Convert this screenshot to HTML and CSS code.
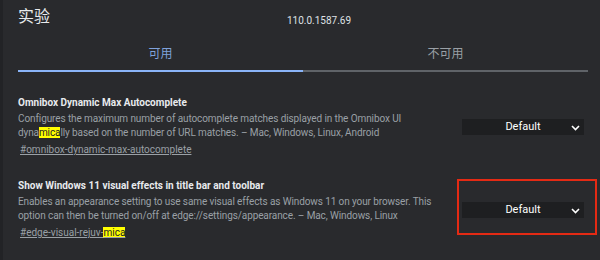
FILE: index.html
```html
<!DOCTYPE html>
<html lang="zh-CN">
<head>
    <meta charset="UTF-8">
    <meta name="viewport" content="width=device-width, initial-scale=1.0">
    <title>实验</title>
    <link rel="stylesheet" href="styles.css">
</head>
<body>
    <div class="header">
        <h1>实验</h1>
        <span class="version">110.0.1587.69</span>
    </div>

    <div class="tabs">
        <div class="tab active">可用</div>
        <div class="tab">不可用</div>
    </div>

    <div class="flag first">
        <div class="flag-text">
            <h3>Omnibox Dynamic Max Autocomplete</h3>
            <p>Configures the maximum number of autocomplete matches displayed in the Omnibox UI dyna<mark>mica</mark>lly based on the number of URL matches. – Mac, Windows, Linux, Android</p>
            <a href="#">#omnibox-dynamic-max-autocomplete</a>
        </div>
        <div class="select">
            <span>Default</span>
            <svg width="9" height="6" viewBox="0 0 9 6"><path d="M1 1l3.5 3.5L8 1" fill="none" stroke="#fff" stroke-width="1.6"/></svg>
        </div>
    </div>

    <div class="flag">
        <div class="flag-text">
            <h3>Show Windows 11 visual effects in title bar and toolbar</h3>
            <p>Enables an appearance setting to use same visual effects as Windows 11 on your browser. This option can then be turned on/off at edge://settings/appearance. – Mac, Windows, Linux</p>
            <a href="#">#edge-visual-rejuv-<mark>mica</mark></a>
        </div>
        <div class="select marked">
            <span>Default</span>
            <svg width="9" height="6" viewBox="0 0 9 6"><path d="M1 1l3.5 3.5L8 1" fill="none" stroke="#fff" stroke-width="1.6"/></svg>
        </div>
    </div>
</body>
</html>
```

FILE: styles.css
```css
body {
    font-family: Roboto, "Noto Sans CJK SC", sans-serif;
    margin: 0;
    padding: 0 12px 0 15px;
    height: 260px;
    background-color: #292a2d;
    border-left: 3px solid #222326;
    color: #e8eaed;
    overflow: hidden;
}
.header {
    display: flex;
    align-items: flex-start;
    height: 40px;
}
h1 {
    font-size: 16px;
    line-height: 20px;
    font-weight: normal;
    margin: 7px 0 0;
    width: 269px;
}
.version {
    font-size: 10px;
    line-height: 12px;
    margin-top: 15px;
    color: #dfe1e5;
}
.tabs {
    display: flex;
}
.tab {
    flex: 1;
    text-align: center;
    font-size: 12px;
    line-height: 16px;
    color: #9aa0a6;
    padding: 6px 0 8px;
    border-bottom: 2px solid #5f6368;
}
.tab.active {
    color: #7fa2dc;
    border-bottom-color: #8ab4f8;
}
.flag {
    display: flex;
    align-items: center;
    margin-top: 22px;
    padding-right: 4px;
}
.flag.first {
    margin-top: 24px;
}
.flag-text {
    width: 420px;
    font-size: 10px;
    line-height: 14px;
}
h3 {
    font-size: 10px;
    line-height: 14px;
    font-weight: bold;
    margin: 0 0 2px;
    color: #e8eaed;
}
p {
    font-size: 10px;
    line-height: 14px;
    letter-spacing: -0.1px;
    margin: 0 0 3px;
    color: #9aa0a6;
}
a {
    display: block;
    width: fit-content;
    font-size: 10px;
    line-height: 14px;
    color: #9aa0a6;
    margin-left: 2px;
}
mark {
    background: #ffff00;
    color: #202124;
}
.select {
    position: relative;
    width: 122px;
    height: 16px;
    background: #1e1f21;
    display: flex;
    align-items: center;
    justify-content: center;
    font-size: 11px;
    color: #fff;
    margin-left: auto;
}
.select svg {
    position: absolute;
    right: 4px;
    top: 6px;
}
.select.marked::after {
    content: "";
    position: absolute;
    left: -5px;
    right: -13px;
    top: -23px;
    bottom: -17px;
    border: 2px solid #e42a14;
}
```
